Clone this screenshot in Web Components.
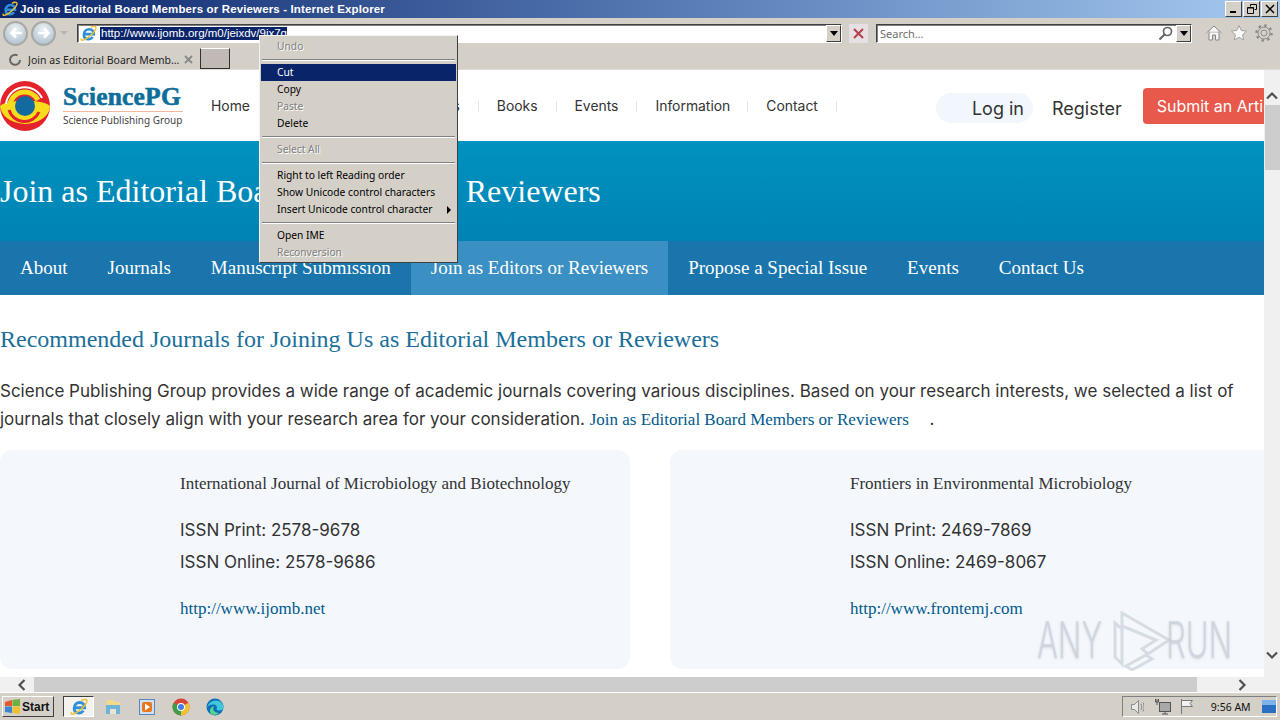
<!DOCTYPE html>
<html lang="en">
<head>
<meta charset="utf-8">
<title>Join as Editorial Board Members or Reviewers</title>
<style>
	html, body { margin: 0; height: 720px; overflow: hidden; background: #d4d0c8; }
</style>
</head>
<body>
<ie-window>
	<ie-titlebar slot="title">Join as Editorial Board Members or Reviewers - Internet Explorer</ie-titlebar>
	<ie-toolbar slot="toolbar"></ie-toolbar>
	<ie-tabs slot="tabs">Join as Editorial Board Memb…</ie-tabs>
	<site-page slot="page">
		<site-header></site-header>
		<site-hero>Join as Editorial Board Members or Reviewers</site-hero>
		<site-nav></site-nav>
		<journal-section>
			<journal-card name="International Journal of Microbiology and Biotechnology" print="2578-9678" online="2578-9686" url="http://www.ijomb.net"></journal-card>
			<journal-card name="Frontiers in Environmental Microbiology" print="2469-7869" online="2469-8067" url="http://www.frontemj.com"></journal-card>
		</journal-section>
	</site-page>
	<ie-vscroll slot="vscroll"></ie-vscroll>
	<ie-hscroll slot="hscroll"></ie-hscroll>
	<win-taskbar slot="taskbar"></win-taskbar>
	<ctx-menu slot="menu"></ctx-menu>
	<any-mark slot="mark"></any-mark>
</ie-window>

<script>
(() => {
	const ui_font = `"Noto Sans", "Liberation Sans", sans-serif`;
	const web_font = `Inter, "Liberation Sans", sans-serif`;
	const serif_font = `"Liberation Serif", serif`;

	const ie_logo = (size) => `
		<svg width="${size}" height="${size}" viewBox="0 0 24 24" fill="none">
			<path d="M5.500 14C5.500 9 9 6 13 6c4 0 6.500 3 6.500 7H7.500M18 17c-1.500 2-3.500 3-6 3-4 0-6.500-2.500-6.500-6" stroke="#2f8fd8" stroke-width="3.800"/>
			<path d="M2 19C0 23 5 22 10 18.500 15 15 21 9 22.500 5 23.500 1.500 19 1 15 3.500" stroke="#f0c030" stroke-width="2"/>
		</svg>`;

	const define = (name, template, setup) => {
		customElements.define(name, class extends HTMLElement {
			constructor() {
				super();
				this.attachShadow({ mode: 'open' });
				this.shadowRoot.innerHTML = typeof template === 'function' ? template(this) : template;
				if (setup) setup(this);
			}
		});
	};

	define('ie-window', `
		<style>
			:host {
				display: grid;
				position: relative;
				width: 1280px;
				height: 720px;
				overflow: hidden;
				grid-template-columns: 1fr 16px;
				grid-template-rows: 18px 30px 22px 607px 16px 27px;
				background: #d4d0c8;
			}
			.wide { grid-column: 1 / 3; display: grid; min-width: 0; min-height: 0; }
			.page { display: block; min-width: 0; min-height: 0; overflow: hidden; background: #fff; }
			.bar { display: grid; min-height: 0; }
		</style>
		<div class="wide"><slot name="title"></slot></div>
		<div class="wide"><slot name="toolbar"></slot></div>
		<div class="wide"><slot name="tabs"></slot></div>
		<div class="page"><slot name="page"></slot></div>
		<div class="bar"><slot name="vscroll"></slot></div>
		<div class="wide"><slot name="hscroll"></slot></div>
		<div class="wide"><slot name="taskbar"></slot></div>
		<slot name="menu"></slot>
		<slot name="mark"></slot>
	`);

	define('ie-titlebar', `
		<style>
			:host {
				display: flex;
				align-items: center;
				gap: 2px;
				padding-left: 2px;
				background: linear-gradient(90deg, #0a246a 0%, #5a7fb8 55%, #a6caf0 100%);
				color: #fff;
				font: bold 11.500px "Liberation Sans", sans-serif;
			}
			.label { flex: 1; white-space: nowrap; letter-spacing: .14px; }
			.buttons { display: flex; gap: 1px; padding-right: 2px; }
			.buttons span {
				width: 15px;
				height: 14px;
				display: grid;
				place-items: center;
				background: #d4d0c8;
				border: 1px solid;
				border-color: #fff #404040 #404040 #fff;
			}
		</style>
		${ie_logo(16)}
		<div class="label"><slot></slot></div>
		<div class="buttons">
			<span><svg width="10" height="10"><rect x="1" y="7" width="6" height="2" fill="#000"/></svg></span>
			<span><svg width="10" height="10" fill="none" stroke="#000"><path d="M3.500 2.500V.5h6v5h-2M.5 3.500h6v6h-6z"/><path d="M.5 4h6"/></svg></span>
			<span><svg width="10" height="10" stroke="#000" stroke-width="1.500"><path d="M1 1l8 8M9 1l-8 8"/></svg></span>
		</div>
	`);

	define('ie-toolbar', `
		<style>
			:host {
				display: flex;
				align-items: center;
				padding: 0 0 0 3px;
				background: #d4d0c8;
				font: 11px ${ui_font};
			}
			.nav { display: flex; gap: 1px; align-items: center; width: 74px; flex: none; }
			.round {
				width: 25px;
				height: 25px;
				box-sizing: border-box;
				border-radius: 50%;
				border: 2px solid #a8a8a4;
				background: radial-gradient(circle at 50% 30%, #eef1f3, #b4c6d4 80%);
				display: grid;
				place-items: center;
				margin-right: 2px;
			}
			.address, .search {
				height: 17px;
				display: flex;
				align-items: center;
				background: #fff;
				border: 1px solid;
				border-color: #404040 #fff #fff #404040;
				box-shadow: inset 1px 1px 0 #808080;
			}
			.address { width: 763px; flex: none; }
			.url {
				background: #0a246a;
				color: #fff;
				padding: 0 0 0 1px;
				font: 11.500px/13px "Liberation Sans", sans-serif;
				margin-left: 3px;
				white-space: nowrap;
			}
			.grow { flex: 1; }
			.drop {
				width: 13px;
				height: 15px;
				background: #d4d0c8;
				border: 1px solid;
				border-color: #fff #404040 #404040 #fff;
				display: grid;
				place-items: center;
			}
			.drop::before { content: ""; border: 4px solid transparent; border-top: 5px solid #000; border-bottom: 0; }
			.stop {
				width: 19px;
				height: 19px;
				margin: 0 8px 0 7px;
				flex: none;
				background: #e6dfe4;
				display: grid;
				place-items: center;
			}
			.search { width: 311px; flex: none; color: #6d6d6d; padding-left: 3px; margin-right: 13px; }
			.tools { display: flex; gap: 7px; align-items: center; }
		</style>
		<div class="nav">
			<div class="round"><svg width="14" height="12" fill="none" stroke="#fff" stroke-width="2.500"><path d="M13 6H3M7 1.500L2.500 6 7 10.500"/></svg></div>
			<div class="round"><svg width="14" height="12" fill="none" stroke="#fff" stroke-width="2.500"><path d="M1 6h10M7 1.500L11.500 6 7 10.500"/></svg></div>
			<svg width="10" height="6"><path d="M1 1h8L5 5z" fill="#b5b5b5"/></svg>
		</div>
		<div class="address">
			<span style="display:grid;margin-left:2px">${ie_logo(17)}</span>
			<span class="url">http://www.ijomb.org/m0/jeixdv/9ix7g</span>
			<span class="grow"></span>
			<span class="drop"></span>
		</div>
		<div class="stop"><svg width="13" height="13" stroke="#b5404a" stroke-width="2"><path d="M2 2l9 9M11 2l-9 9"/></svg></div>
		<div class="search">
			<span class="grow">Search…</span>
			<svg width="15" height="15" fill="none" stroke="#666" stroke-width="1.700"><circle cx="9.500" cy="5.500" r="4"/><path d="M6.500 8.500L1.500 13.500" stroke-width="2.200"/></svg>
			<span class="drop" style="margin-left:3px"></span>
		</div>
		<div class="tools">
			<svg width="18" height="18" fill="#f6f6f6" stroke="#868686"><path d="M1.500 9L9 2l7.500 7M4 7.500V16h3.500v-5h3v5H14V7.500"/></svg>
			<svg width="18" height="18" fill="#fafafa" stroke="#a0a0a0"><path d="M9 1.500l2.300 5 5.200.6-3.900 3.600 1.100 5.300L9 13.300 4.300 16l1.100-5.300L1.500 7.100l5.200-.6z"/></svg>
			<svg width="18" height="18" fill="none" stroke="#8c8c8c"><circle cx="9" cy="9" r="3"/><circle cx="9" cy="9" r="6"/><circle cx="9" cy="9" r="7.500" stroke-width="2.500" stroke-dasharray="2.500 3.390"/></svg>
		</div>
	`);

	define('ie-tabs', `
		<style>
			:host {
				display: flex;
				align-items: stretch;
				background: #d4d0c8;
				border-bottom: 1px solid #e0dcd6;
				box-sizing: border-box;
				font: 10.500px ${ui_font};
				color: #1e1e1e;
			}
			.tab { width: 200px; flex: none; display: flex; align-items: center; padding: 2px 0 0 8px; box-sizing: border-box; }
			.label { margin-left: 6px; width: 156px; white-space: nowrap; overflow: hidden; letter-spacing: .02px; }
			.new {
				width: 30px;
				background: #c0b9b5;
				border: 1px solid;
				border-color: #fff #303030 #303030 #303030;
				box-sizing: border-box;
			}
		</style>
		<div class="tab">
			<svg width="14" height="14" fill="none" stroke="#666" stroke-width="2"><path d="M9.500 2.500A5 5 0 1 0 12 7"/></svg>
			<span class="label"><slot></slot></span>
			<svg width="9" height="9" stroke="#888" stroke-width="1.800"><path d="M1 1l7 7M8 1L1 8"/></svg>
		</div>
		<div class="new"></div>
	`);

	define('site-page', `
		<style>
			:host { display: block; width: 1264px; height: 607px; overflow: hidden; background: #fff; }
		</style>
		<slot></slot>
	`);

	define('site-header', () => {
		const items = ['Home', 'Journals', 'Proceedings', 'Books', 'Events', 'Information', 'Contact'];
		return `
		<style>
			:host {
				display: flex;
				align-items: center;
				height: 71px;
				background: #fff;
				color: #333;
				font-family: ${web_font};
				white-space: nowrap;
			}
			.logo { display: flex; align-items: center; gap: 13px; width: 193px; flex: none; }
			.brand { display: flex; flex-direction: column; }
			.name {
				font: bold 25.500px/28px ${serif_font};
				color: #0e6e9a;
				border-bottom: 1px solid #f0b8a0;
				width: 120px;
				letter-spacing: .2px;
				-webkit-text-stroke: .6px #0e6e9a;
			}
			.sub { font: 10px/15px ${ui_font}; color: #444; margin-top: 1px; }
			nav { display: flex; align-items: center; margin: 2px 0 0 18px; font-size: 13.900px; flex: none; width: 626px; }
			nav a { padding: 0 18px; border-right: 1px solid #e4e4e4; line-height: 11px; }
			nav a:first-child { padding-left: 0; }
			nav a:nth-child(3) { padding-left: 15px; }
			nav a:nth-child(6) { padding-right: 17px; }
			.login {
				margin-left: 99px;
				width: 97px;
				height: 30px;
				margin-top: 5px;
				box-sizing: border-box;
				padding-right: 9px;
				border-radius: 15px;
				background: #f2f7fd;
				font-size: 18px;
				line-height: 32px;
				text-align: right;
				flex: none;
			}
			.register { margin: 5px 0 0 19px; font-size: 18px; flex: none; }
			.submit {
				margin-left: 21px;
				padding: 0 14px;
				height: 36px;
				line-height: 36px;
				background: #e8594b;
				color: #fff;
				border-radius: 4px;
				font-size: 16px;
				flex: none;
			}
		</style>
		<div class="logo">
			<svg width="50" height="50" viewBox="0 0 50 50" fill="none" style="flex:none">
				<circle cx="25" cy="25" r="25" fill="#e3222b"/>
				<path d="M0 25C6 18 44 18 50 25 50 33 42 42 25 43 9 42 1 34 0 25z" fill="#f7dc1e"/>
				<path d="M6 23A19 19 0 0 1 42 17" stroke="#fff" stroke-width="2"/>
				<path d="M10 23A15 15 0 0 1 38 19" stroke="#f7dc1e" stroke-width="5"/>
				<path d="M9 29A16 16 0 0 0 39 31" stroke="#e3222b" stroke-width="3"/>
				<circle cx="25" cy="25" r="10" fill="#136a9f"/>
			</svg>
			<div class="brand">
				<span class="name">SciencePG</span>
				<span class="sub">Science Publishing Group</span>
			</div>
		</div>
		<nav>${items.map((item) => `<a>${item}</a>`).join('')}</nav>
		<div class="login">Log in</div>
		<div class="register">Register</div>
		<div class="submit">Submit an Article</div>
	`;
	});

	define('site-hero', `
		<style>
			:host {
				display: flex;
				align-items: center;
				height: 100px;
				background: linear-gradient(180deg, #0093c0, #0082b4);
				color: #fff;
				font: 32px ${serif_font};
				white-space: nowrap;
			}
		</style>
		<slot></slot>
	`);

	define('site-nav', () => {
		const items = ['About', 'Journals', 'Manuscript Submission', 'Join as Editors or Reviewers', 'Propose a Special Issue', 'Events', 'Contact Us'];
		return `
		<style>
			:host {
				display: flex;
				height: 54px;
				background: #1a75ad;
				color: #fff;
				font: 19px/54px ${serif_font};
				white-space: nowrap;
			}
			a { padding: 0 20px; }
			a.on { background: #3a8fc3; }
		</style>
		${items.map((item, i) => `<a class="${i === 3 ? 'on' : ''}">${item}</a>`).join('')}
	`;
	});

	define('journal-section', `
		<style>
			:host { display: block; padding-top: 27px; color: #333; }
			h2 { margin: 0; font: normal 24px/34px ${serif_font}; color: #1a6f9a; white-space: nowrap; }
			p { margin: 21px 0 17px; font: 17px/28px ${web_font}; width: 1260px; }
			a { font: 17px ${serif_font}; color: #005a8c; }
			.dot { margin-left: 16px; }
			.cards { display: flex; gap: 40px; }
		</style>
		<h2>Recommended Journals for Joining Us as Editorial Members or Reviewers</h2>
		<p>Science Publishing Group provides a wide range of academic journals covering various disciplines. Based on your research interests, we selected a list of journals that closely align with your research area for your consideration. <a>Join as Editorial Board Members or Reviewers</a> <span class="dot">.</span></p>
		<div class="cards"><slot></slot></div>
	`);

	define('journal-card', (el) => `
		<style>
			:host {
				display: block;
				flex: none;
				width: 630px;
				height: 219px;
				box-sizing: border-box;
				padding: 23px 0 0 180px;
				border-radius: 12px;
				background: #f4f8fd;
				color: #333;
				font: 17px/32px ${web_font};
			}
			.name { font: 17px/22px ${serif_font}; margin-bottom: 19px; }
			a { display: block; margin-top: 20px; font: 17px/22px ${serif_font}; color: #005a8c; }
		</style>
		<div class="name">${el.getAttribute('name')}</div>
		<div>ISSN Print: ${el.getAttribute('print')}</div>
		<div>ISSN Online: ${el.getAttribute('online')}</div>
		<a>${el.getAttribute('url')}</a>
	`);

	define('ie-vscroll', `
		<style>
			:host {
				display: grid;
				grid-template-rows: 35px 65px 1fr 30px;
				background: #f0f0f0;
				justify-items: center;
			}
			.thumb { width: 15px; background: #cdcdcd; }
			.up, .down { display: grid; align-items: end; padding-bottom: 5px; }
			.down { align-items: start; padding: 0; margin-top: 4px; }
		</style>
		<div class="up"><svg width="12" height="9" fill="none" stroke="#505050" stroke-width="2.200"><path d="M1 7.500l5-5 5 5"/></svg></div>
		<div class="thumb"></div>
		<div></div>
		<div class="down"><svg width="12" height="9" fill="none" stroke="#505050" stroke-width="2.200"><path d="M1 1.500l5 5 5-5"/></svg></div>
	`);

	define('ie-hscroll', `
		<style>
			:host {
				display: grid;
				grid-template-columns: 34px 1163px 1fr;
				align-items: center;
				background: #f0f0f0;
				border-bottom: 1px solid #fff;
				box-sizing: border-box;
			}
			.thumb { height: 15px; background: #cdcdcd; }
			.left { padding-left: 17px; display: grid; }
			.right { padding-left: 41px; display: grid; }
		</style>
		<div class="left"><svg width="9" height="12" fill="none" stroke="#505050" stroke-width="2.200"><path d="M7.500 1l-5 5 5 5"/></svg></div>
		<div class="thumb"></div>
		<div class="right"><svg width="9" height="12" fill="none" stroke="#505050" stroke-width="2.200"><path d="M1.500 1l5 5-5 5"/></svg></div>
	`);

	define('win-taskbar', `
		<style>
			:host {
				display: flex;
				align-items: center;
				padding: 0 3px 0 2px;
				background: #d4d0c8;
				font: 10.500px ${ui_font};
				color: #111;
			}
			.start {
				width: 52px;
				height: 21px;
				box-sizing: border-box;
				display: flex;
				align-items: center;
				gap: 1px;
				padding-left: 1px;
				border: 1px solid;
				border-color: #fff #404040 #404040 #fff;
				font: bold 12px "Liberation Sans", sans-serif;
			}
			.active {
				width: 31px;
				height: 21px;
				margin: 0 10px 0 9px;
				box-sizing: border-box;
				display: grid;
				place-items: center;
				background: #f4f2ee;
				border: 1px solid;
				border-color: #404040 #fff #fff #404040;
			}
			.apps { display: flex; gap: 16px; align-items: center; }
			.grow { flex: 1; }
			.tray {
				width: 155px;
				height: 21px;
				box-sizing: border-box;
				display: flex;
				align-items: center;
				padding-left: 7px;
				border: 1px solid;
				border-color: #808080 #fff #fff #808080;
			}
			.time { margin: 0 11px 0 16px; white-space: nowrap; }
		</style>
		<div class="start">
			<svg width="17" height="17" viewBox="0 0 17 17"><path d="M1 4l7-2v6H1z" fill="#e8582a"/><path d="M8.500 2L16 1v7H8.500z" fill="#6fb040"/><path d="M1 8.500h7V15l-7-1z" fill="#3a86d0"/><path d="M8.500 8.500H16V16l-7.500-1z" fill="#f0c030"/></svg>
			Start
		</div>
		<div class="active">${ie_logo(18)}</div>
		<div class="apps">
			<svg width="18" height="18"><path d="M2 5l2-3h5l2 2h5v3H2z" fill="#f3d98a"/><rect x="2" y="7" width="14" height="9" fill="#6db4d8"/><rect x="6" y="11" width="6" height="5" fill="#e8e4d0"/></svg>
			<svg width="18" height="18"><rect x="1.500" y="1.500" width="15" height="15" fill="#cfe0f4" stroke="#5b87c0"/><rect x="4" y="4" width="10" height="10" rx="2" fill="#e8761c"/><path d="M7 5.500l5 3.500-5 3.500z" fill="#fff"/></svg>
			<svg width="18" height="18" viewBox="0 0 18 18"><circle cx="9" cy="9" r="8.500" fill="#d6453a"/><path d="M9 9L16.400 4.800A8.500 8.500 0 0 1 9 17.500z" fill="#f2c230"/><path d="M9 9v8.500A8.500 8.500 0 0 1 1.600 4.800z" fill="#3f9e4a"/><circle cx="9" cy="9" r="4" fill="#fff"/><circle cx="9" cy="9" r="3" fill="#3f7fe0"/></svg>
			<svg width="18" height="18" viewBox="0 0 18 18"><circle cx="9" cy="9" r="8.500" fill="#0f6cbd"/><path d="M1 10C2 4 8 1 13 3c3 1 4.500 4 4.500 6.500 0 2-2 3-4 3-1.500 0-3-.5-3-1.500 1-1 .5-4-2.500-4.500C4.500 6 1.500 8 1 10z" fill="#3fc8d8"/><path d="M5 16c-2-3-1-7 3-8-2 3 0 7 5 7-2 2-5 2.500-8 1z" fill="#55d68a"/></svg>
		</div>
		<div class="grow"></div>
		<div class="tray">
			<svg width="15" height="16" fill="none" stroke="#8a8a8a"><path d="M1.500 5.500h3l4-4v13l-4-4h-3z" fill="#e8e8e8"/><path d="M11 5c1 2 1 4 0 6M13 3.500c1.500 3 1.500 6 0 9"/></svg>
			<svg width="18" height="17" style="margin-left:10px" fill="none" stroke="#555"><rect x="5.500" y="4.500" width="11" height="9" fill="#a8a8a8"/><path d="M3 1v6M1.500 1v3h3V1M8 16h6M11 14v2"/></svg>
			<svg width="18" height="17" style="margin-left:6px" fill="none" stroke="#777"><path d="M3.500 1v15"/><path d="M3.500 2.500h11l-2.500 3 2.500 3h-11z" fill="#f2f2f2"/></svg>
			<span class="time">9:56 AM</span>
			<svg width="15" height="15"><rect width="15" height="13" y="1" fill="#2a6fc0"/><rect width="15" height="5" y="1" fill="#7fb2e8"/></svg>
		</div>
	`);

	define('ctx-menu', () => {
		const rows = [
			['Undo', 'off'], 0,
			['Cut', 'on'], ['Copy'], ['Paste', 'off'], ['Delete'], 0,
			['Select All', 'off'], 0,
			['Right to left Reading order'], ['Show Unicode control characters'], ['Insert Unicode control character', 'sub'], 0,
			['Open IME'], ['Reconversion', 'off']
		];
		return `
		<style>
			:host {
				position: absolute;
				left: 259px;
				top: 35px;
				width: 199px;
				height: 228px;
				box-sizing: border-box;
				padding: 2px 1px 0;
				background: #d4d0c8;
				border: 1px solid;
				border-color: #f4f2ee #404040 #404040 #f4f2ee;
				font: 10.250px/17px ${ui_font};
				color: #000;
			}
			div { height: 17px; padding-left: 16px; position: relative; white-space: nowrap; }
			.on { background: #0a246a; color: #fff; }
			.off { color: #808080; text-shadow: 1px 1px 0 #fff; }
			.sub::after {
				content: "";
				position: absolute;
				right: 5px;
				top: 5px;
				border: 4px solid transparent;
				border-left: 4px solid #000;
				border-right: 0;
			}
			hr { height: 0; margin: 4px 1px 3px; border: 0; border-top: 1px solid #808080; border-bottom: 1px solid #fff; }
		</style>
		${rows.map((row) => row ? `<div class="${row[1] || ''}">${row[0]}</div>` : '<hr>').join('')}
	`;
	});

	define('any-mark', `
		<style>
			:host {
				position: absolute;
				left: 1037px;
				top: 608px;
				display: flex;
				align-items: center;
				height: 64px;
				pointer-events: none;
				color: rgba(198, 204, 214, .6);
				font: 300 50px/1 Inter, sans-serif;
				text-shadow: 0 1px 3px rgba(170, 175, 185, .4);
			}
			span { display: inline-block; transform: scaleX(.62); transform-origin: left; }
			.a { margin-right: -30px; }
			.b { margin-left: -6px; margin-right: -40px; }
		</style>
		<span class="a">ANY</span>
		<svg width="60" height="62" viewBox="0 0 60 62" fill="none" stroke="rgba(198,204,214,.65)" stroke-width="3">
			<path d="M3 14v34l7 7V20zM10 4l47 27-21 14-6-5 14-9L10 17zM14 57l20-11 6 4-20 11z"/>
		</svg>
		<span class="b">RUN</span>
	`);
})();
</script>
</body>
</html>
